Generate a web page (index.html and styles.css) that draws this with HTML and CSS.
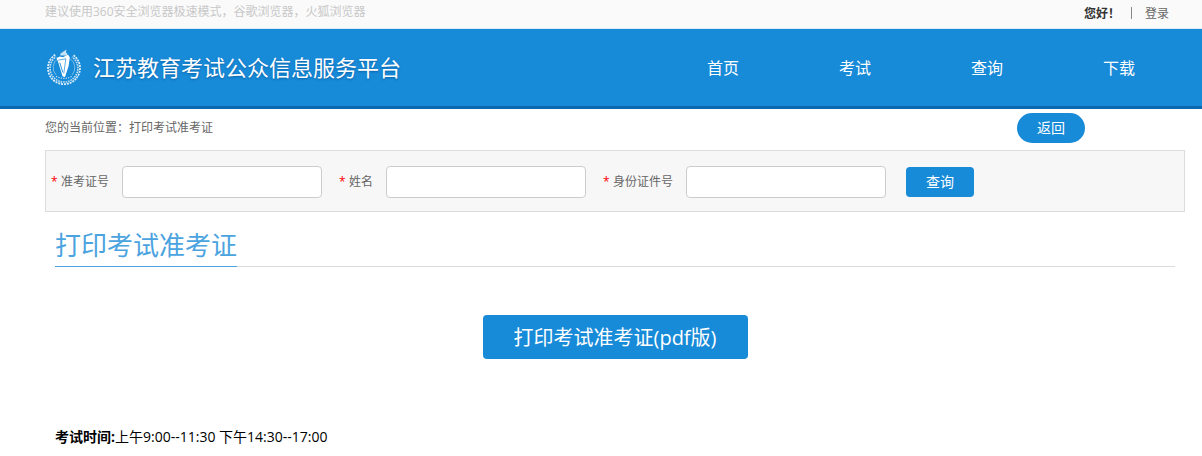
FILE: index.html
```html
<!DOCTYPE html>
<html lang="zh-CN">
<head>
    <meta charset="UTF-8">
    <meta name="viewport" content="width=device-width, initial-scale=1.0">
    <title>江苏教育考试公众信息服务平台</title>
    <link rel="stylesheet" href="styles.css">
</head>
<body>
    <div class="topbar">
        <div class="container topbar-inner">
            <span class="tip">建议使用360安全浏览器极速模式，谷歌浏览器，火狐浏览器</span>
            <div class="user">
                <strong>您好！</strong>
                <span class="divider"></span>
                <a href="#" class="login">登录</a>
            </div>
        </div>
    </div>

    <header class="header">
        <div class="container header-inner">
            <div class="brand">
                <svg class="logo" viewBox="0 0 36 36" fill="none" stroke="#fff">
                    <!-- wreath -->
                    <path d="M10.2 5.8A16 16 0 1 0 27.8 5.8" stroke-width="1.8" stroke-dasharray="2 .9" opacity=".85"/>
                    <path d="M11 7.8A13.9 13.9 0 1 0 27 7.8" stroke-width="1.6" stroke-dasharray="1.6 .9" stroke-dashoffset="1" opacity=".75"/>
                    <path d="M13 9.5A11 11 0 0 0 11 26M25 9.5A11 11 0 0 1 27 26" stroke-width=".7" opacity=".6"/>
                    <path d="M11 27.4Q19 31.4 27 27.4" stroke-width="1.2" stroke-dasharray="1.2 1.3" opacity=".75"/>
                    <!-- torch -->
                    <path d="M15.5 4.4L21.4 .4L21 3.4L22.4 4.4L21.6 6.6L15.2 6.4Z" fill="#fff" stroke="none" opacity=".75"/>
                    <path d="M11.6 9L15 7.4L18 8.2L23 5.6L24.8 8.6L23.6 17L20 28L17.6 27.4L13.6 14.6Z" fill="#fff" stroke="none"/>
                    <path d="M13.2 11.2L20.8 9.8L18.8 24.5" stroke="#178ad8" stroke-width=".7"/>
                    <path d="M14.8 13.6L17.8 23.5" stroke="#178ad8" stroke-width=".9"/>
                </svg>
                <span class="site-name">江苏教育考试公众信息服务平台</span>
            </div>
            <nav class="nav">
                <a href="#">首页</a>
                <a href="#">考试</a>
                <a href="#">查询</a>
                <a href="#">下载</a>
            </nav>
        </div>
    </header>

    <main class="container">
        <div class="location">
            <span>您的当前位置：打印考试准考证</span>
            <button type="button" class="btn btn-back">返回</button>
        </div>

        <form class="search">
            <div class="field">
                <label for="ticket"><span class="required">*</span>准考证号</label>
                <input type="text" id="ticket">
            </div>
            <div class="field">
                <label for="name"><span class="required">*</span>姓名</label>
                <input type="text" id="name">
            </div>
            <div class="field">
                <label for="idcard"><span class="required">*</span>身份证件号</label>
                <input type="text" id="idcard">
            </div>
            <button type="button" class="btn btn-search">查询</button>
        </form>

        <section class="content">
            <div class="title-row">
                <h1>打印考试准考证</h1>
            </div>
            <div class="print">
                <button type="button" class="btn btn-print">打印考试准考证(pdf版)</button>
            </div>
            <p class="exam-time"><strong>考试时间:</strong>上午9:00--11:30 下午14:30--17:00</p>
        </section>
    </main>
</body>
</html>
```
FILE: styles.css
```css
* {
    box-sizing: border-box;
}
body {
    margin: 0;
    font-family: "Open Sans", "Noto Sans CJK SC", sans-serif;
    font-size: 12px;
    line-height: 20px;
    color: #666;
    background-color: #fff;
}
a {
    color: inherit;
    text-decoration: none;
}
.container {
    padding: 0 17px 0 45px;
}

/* top bar */
.topbar {
    background-color: #fafafa;
    border-bottom: 1px solid #d9ebf5;
}
.topbar-inner {
    display: flex;
    justify-content: space-between;
    height: 28px;
    padding-top: 2px;
}
.tip {
    color: #c8c8c8;
}
.user {
    display: flex;
    padding-top: 2px;
    padding-right: 16px;
}
.user strong {
    color: #333;
}
.divider {
    width: 1px;
    height: 12px;
    margin: 3px 13px 0 11px;
    background-color: #888;
}

/* header */
.header {
    background-color: #178ad8;
    border-bottom: 3px solid #0c68b0;
    color: #fff;
}
.header-inner {
    display: flex;
    justify-content: space-between;
    align-items: center;
    height: 77px;
}
.brand {
    display: flex;
    align-items: center;
    gap: 12px;
    padding-bottom: 2px;
}
.logo {
    width: 36px;
    height: 36px;
}
.site-name {
    font-size: 22px;
    line-height: 32px;
    text-shadow: 0 1px 2px rgba(0, 60, 120, 0.5);
}
.nav {
    display: flex;
}
.nav a {
    width: 132px;
    font-size: 16px;
    text-align: center;
}

/* buttons */
.btn {
    border: 0;
    padding: 0 20px 2px;
    height: 30px;
    font-family: inherit;
    font-size: 14px;
    color: #fff;
    background-color: #178ad8;
    cursor: pointer;
}
.btn-back {
    margin-right: 100px;
    border-radius: 15px;
}
.btn-search {
    margin-left: 3px;
    border-radius: 4px;
}
.btn-print {
    height: 44px;
    padding: 0 31px 2px;
    font-size: 20px;
    border-radius: 4px;
}

.location {
    display: flex;
    justify-content: space-between;
    align-items: center;
    padding: 4px 0 7px;
}

/* search form */
.search {
    display: flex;
    align-items: center;
    gap: 17px;
    padding: 15px 5px 13px;
    background-color: #f7f7f7;
    border: 1px solid #dcdcdc;
}
.field {
    display: flex;
    align-items: center;
    gap: 13px;
}
.required {
    display: inline-block;
    width: 10px;
    color: #f00;
}
.field input {
    width: 200px;
    height: 32px;
    padding: 0 8px;
    border: 1px solid #ccc;
    border-radius: 4px;
    font-size: 14px;
    background-color: #fff;
}

/* content */
.content {
    padding: 14px 10px 8px;
}
.title-row {
    display: flex;
    border-bottom: 1px solid #dcdcdc;
}
.title-row h1 {
    margin: 0 0 -1px;
    padding-bottom: 2px;
    font-size: 26px;
    font-weight: 400;
    line-height: 38px;
    color: #4ba3e0;
    border-bottom: 1px solid #4ba3e0;
}
.print {
    padding: 48px 0;
    text-align: center;
}
.exam-time {
    margin: 20px 0 0;
    font-size: 14px;
    color: #000;
}
```
